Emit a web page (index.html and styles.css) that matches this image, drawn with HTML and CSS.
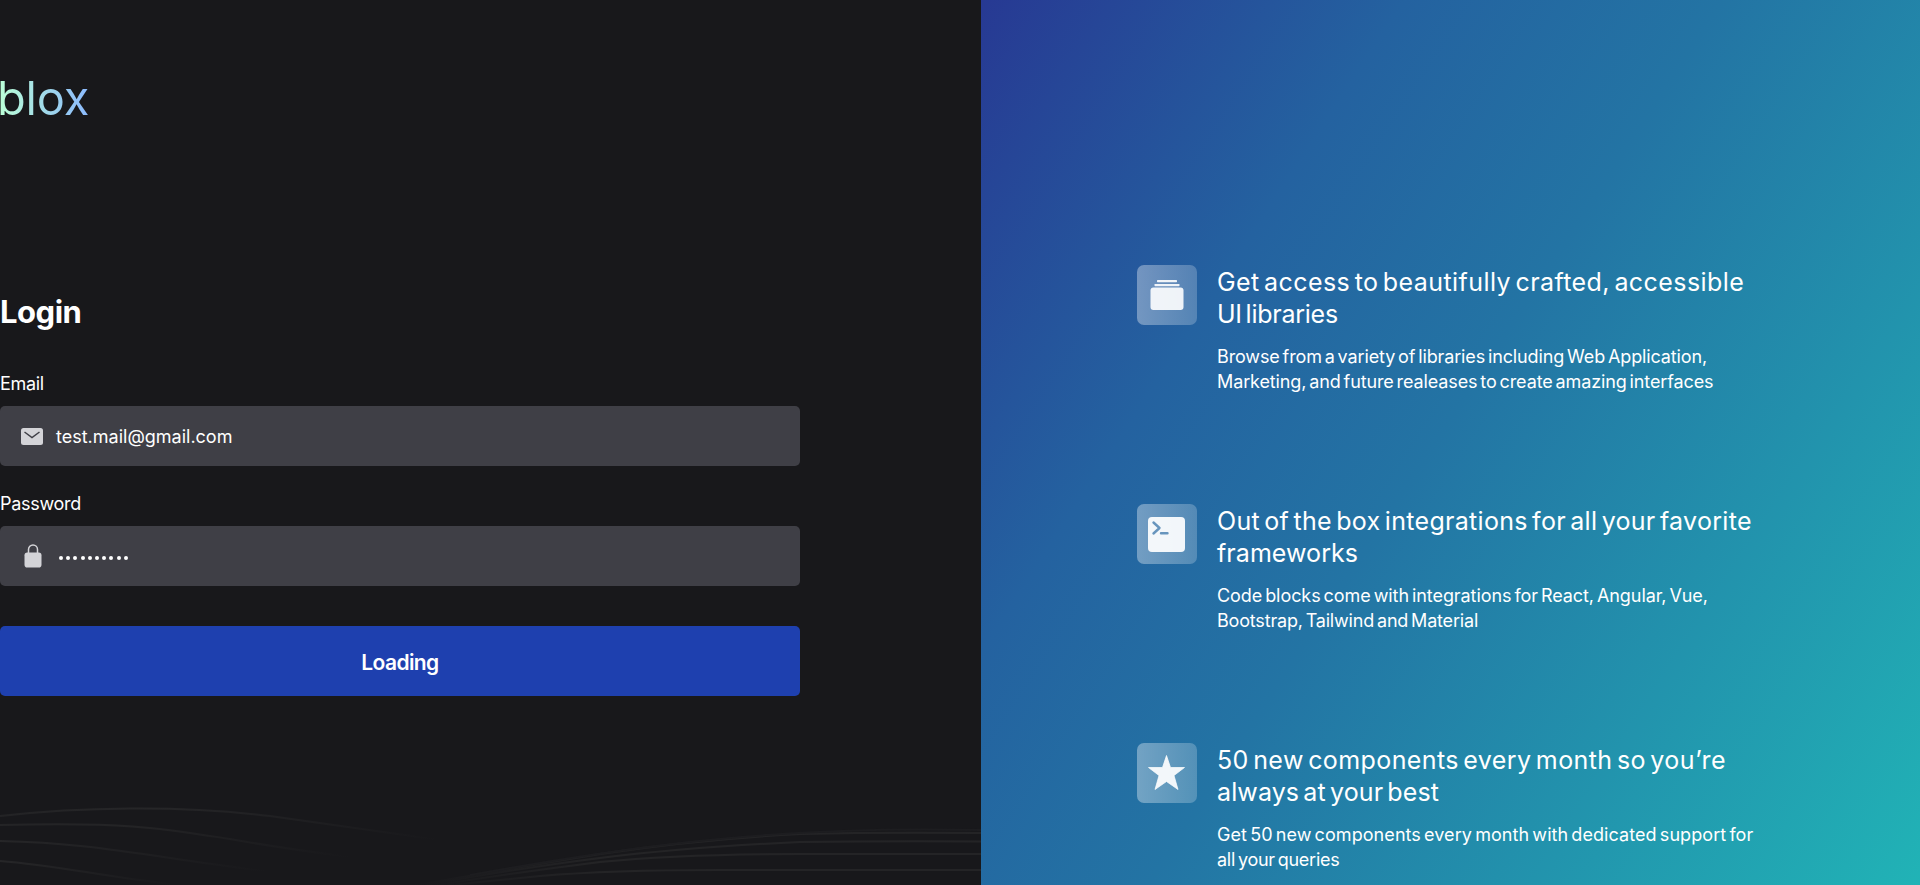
FILE: index.html
```html
<!DOCTYPE html>
<html lang="en">
<head>
<meta charset="utf-8">
<title>blox – Login</title>
<link rel="stylesheet" href="styles.css">
</head>
<body>
<div class="page">
  <main class="login">
    <svg class="waves" width="981" height="85" viewBox="0 800 981 85" fill="none">
      <defs>
        <linearGradient id="fade-a" gradientUnits="userSpaceOnUse" x1="0" y1="0" x2="440" y2="0"><stop offset="0" stop-color="#232325"/><stop offset=".35" stop-color="#262628"/><stop offset="1" stop-color="#18181b"/></linearGradient>
        <linearGradient id="fade-b" gradientUnits="userSpaceOnUse" x1="0" y1="0" x2="350" y2="0"><stop offset="0" stop-color="#242426"/><stop offset=".35" stop-color="#242426"/><stop offset="1" stop-color="#18181b"/></linearGradient>
        <linearGradient id="fade-c" gradientUnits="userSpaceOnUse" x1="0" y1="0" x2="270" y2="0"><stop offset="0" stop-color="#262628"/><stop offset="1" stop-color="#18181b"/></linearGradient>
        <linearGradient id="fade-d" gradientUnits="userSpaceOnUse" x1="0" y1="0" x2="180" y2="0"><stop offset="0" stop-color="#262628"/><stop offset="1" stop-color="#18181b"/></linearGradient>
        <linearGradient id="fade-r" gradientUnits="userSpaceOnUse" x1="410" y1="0" x2="600" y2="0"><stop offset="0" stop-color="#18181b"/><stop offset="1" stop-color="#242426"/></linearGradient>
      </defs>
      <g stroke-width="2">
        <path stroke="url(#fade-a)" d="M0 816Q62 809 130 808.500Q205 808 270 816Q340 826 440 840"/>
        <path stroke="url(#fade-b)" d="M0 825C130 822 160 828 230 839Q280 848 350 857"/>
        <path stroke="url(#fade-c)" d="M0 841C95 843 150 857 265 871"/>
        <path stroke="url(#fade-d)" d="M0 861C55 865 100 876 170 884"/>
        <g stroke="url(#fade-r)">
          <path d="M440 886Q500 880 540 876Q610 870 720 870H981"/>
          <path d="M430 886Q520 872 600 862Q680 854 800 854H981"/>
          <path d="M420 886Q520 868 600 858Q690 847 800 842Q880 841 981 841.500"/>
          <path d="M410 886Q520 867 600 854Q700 839 800 834Q880 832 981 833"/>
        </g>
        <path stroke="#1d1d20" d="M470 875Q620 848 720 839Q840 827 981 830"/>
      </g>
    </svg>
    <div class="logo">blox</div>
    <h1 class="heading">Login</h1>
    <form class="form">
      <label class="label label-email">Email</label>
      <div class="field">
        <svg class="field-icon" width="22" height="17" viewBox="0 0 22 17"><rect width="22" height="17" rx="2.500" fill="#d4d4d8"/><path d="M3.500 4 11 9.500 18.500 4" fill="none" stroke="#3f3f46" stroke-width="1.500"/></svg>
        <span class="value">test.mail@gmail.com</span>
      </div>
      <label class="label label-password">Password</label>
      <div class="field field-password">
        <svg class="field-icon" width="18" height="24" viewBox="0 0 18 24"><rect x=".5" y="8.500" width="17" height="15" rx="2.800" fill="#d4d4d8"/><path d="M4.500 9V5.500a4.500 4.500 0 0 1 9 0V9" fill="none" stroke="#d4d4d8" stroke-width="1.500"/></svg>
        <span class="dots"><i></i><i></i><i></i><i></i><i></i><i></i><i></i><i></i><i></i><i></i></span>
      </div>
      <button class="submit" type="button">Loading</button>
    </form>
  </main>
  <aside class="features">
    <section class="feature">
      <div class="badge"><svg width="60" height="60" viewBox="0 0 60 60" fill="#fff" fill-opacity=".9"><rect x="20" y="15" width="20" height="2.200" rx=".6"/><rect x="17.500" y="19" width="25" height="2.200" rx=".6"/><rect x="13.500" y="22.500" width="33" height="22.500" rx="3"/></svg></div>
      <div class="copy">
        <h2><span class="t1">Get access to beautifully crafted, accessible</span><span class="t2">UI libraries</span></h2>
        <p><span class="d1">Browse from a variety of libraries including Web Application,</span><span class="d2">Marketing, and future realeases to create amazing interfaces</span></p>
      </div>
    </section>
    <section class="feature">
      <div class="badge"><svg width="60" height="60" viewBox="0 0 60 60"><rect x="11" y="13" width="37" height="35" rx="4" fill="#fff" fill-opacity=".92"/><path d="m16.500 18.500 6 5.500-6 5.500M24 29.200h6.500" fill="none" stroke="#6795bd" stroke-width="2.400" stroke-linecap="round" stroke-linejoin="round"/></svg></div>
      <div class="copy">
        <h2><span class="t3">Out of the box integrations for all your favorite</span><span class="t4">frameworks</span></h2>
        <p><span class="d3">Code blocks come with integrations for React, Angular, Vue,</span><span class="d4">Bootstrap, Tailwind and Material</span></p>
      </div>
    </section>
    <section class="feature">
      <div class="badge"><svg width="60" height="60" viewBox="0 0 60 60"><path d="M29.500 12.500 33.500 24.500H47.500L37 32.500 41 46.500 29.500 38.500 18 46.500 22 32.500 11.500 24.500H25.500Z" fill="#fff" fill-opacity=".92" stroke="#fff" stroke-opacity=".7" stroke-width="1" stroke-linejoin="round"/></svg></div>
      <div class="copy">
        <h2><span class="t5">50 new components every month so you’re</span><span class="t6">always at your best</span></h2>
        <p><span class="d5">Get 50 new components every month with dedicated support for</span><span class="d6">all your queries</span></p>
      </div>
    </section>
  </aside>
</div>
</body>
</html>
```
FILE: styles.css
```css
* { box-sizing: border-box; }
body { margin: 0; background: #18181b; color: #fff; font-family: Inter, "Noto Sans", sans-serif; }
.page { display: grid; grid-template-columns: 981px 1fr; grid-template-rows: 885px; height: 885px; overflow: hidden; }
.login { position: relative; background: #18181b; padding-top: 68px; }
.waves { position: absolute; left: 0; bottom: 0; }
.logo { width: 92px; height: 60px; line-height: 59px; font-size: 47px; font-weight: 400; letter-spacing: -.2px; text-indent: -3px; color: transparent; background: linear-gradient(90deg, #bbffd8, #a0d8ea 50%, #8ab8ff); background-clip: text; -webkit-background-clip: text; }
.heading { margin: 164px 0 0; height: 40px; line-height: 40px; font-size: 31px; font-weight: 700; letter-spacing: -.5px; }
.form { display: flex; flex-direction: column; width: 800px; padding-top: 40px; }
.label { height: 24px; line-height: 24px; font-size: 18px; letter-spacing: -.3px; }
.field { display: flex; align-items: center; gap: 13px; height: 60px; margin-top: 10px; padding-left: 21px; background: #3f3f46; border-radius: 5px; }
.field-password { padding-left: 24px; gap: 17px; }
.label-password { margin-top: 26px; }
.value { font-size: 18px; }
.dots { display: flex; gap: 3.200px; padding-top: 3px; }
.dots i { width: 4px; height: 4px; border-radius: 50%; background: #fff; }
.submit { height: 70px; margin-top: 40px; padding-top: 3px; border: 0; border-radius: 5px; background: #1e40af; color: #fff; font: 600 21px Inter, sans-serif; letter-spacing: -.6px; }
.features { display: flex; flex-direction: column; padding: 265px 0 0 156px; background: linear-gradient(123deg, #273993, #2462a0 28%, #2374a4 49%, #21b3b6); }
.feature { display: flex; gap: 20px; height: 239px; flex: none; }
.badge { width: 60px; height: 60px; border-radius: 7px; background: linear-gradient(90deg, rgba(255,255,255,.36), rgba(255,255,255,.22)); flex: none; }
.badge svg { display: block; }
h2, p { margin: 0; font-weight: 400; }
h2 { font-size: 25px; line-height: 32px; padding-top: 1px; word-spacing: -3px; }
p { font-size: 18px; line-height: 25px; padding-top: 14px; word-spacing: -2px; }
.copy span { display: block; width: max-content; white-space: nowrap; }
.t1 { letter-spacing: .42px; }
.t2 { letter-spacing: -.25px; }
.t3 { letter-spacing: .3px; }
.t4 { letter-spacing: .06px; }
.t5 { letter-spacing: .4px; }
.t6 { letter-spacing: .12px; }
.d1 { letter-spacing: -.13px; }
.d2 { letter-spacing: -.12px; }
.d3 { letter-spacing: -.07px; }
.d4 { letter-spacing: -.18px; }
.d5 { letter-spacing: .07px; }
.d6 { letter-spacing: -.25px; }
```
